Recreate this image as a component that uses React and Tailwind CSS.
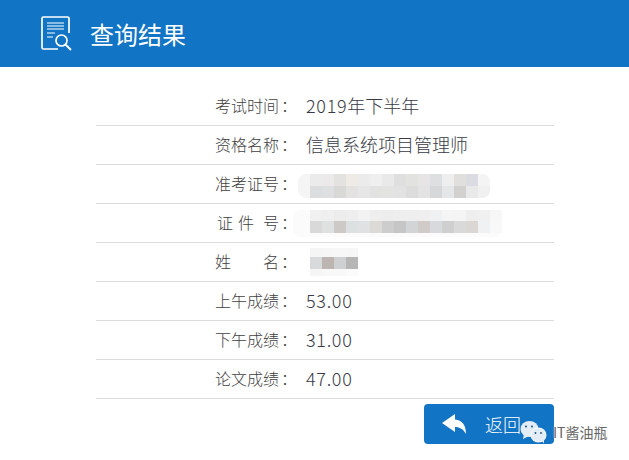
const cjk = 'font-["Noto_Sans_CJK_SC","Microsoft_YaHei",sans-serif]';

// blurred-out personal data, drawn as the mosaic blocks of the screenshot
function Mosaic({ cells, className }) {
  return (
    <div className={`flex ${className}`}>
      {cells.map((c, i) => (
        <div key={i} className="h-full w-[12px]" style={{ background: c }} />
      ))}
    </div>
  );
}

function Row({ label, value, children }) {
  return (
    <div className="flex h-[39px] items-center border-b border-[#dcdcdc] pb-[2px] pl-[119px]">
      <div className="w-[91px] text-[16px] font-light text-[#3f3f3f]">{label}</div>
      {value && <div className="text-[18px] font-light text-[#3a3a46]">{value}</div>}
      {children}
    </div>
  );
}

function Colon() {
  return <span className="ml-[2px]">：</span>;
}

function Num({ children }) {
  return <span className="tracking-[0.7px]">{children}</span>;
}

const rows = [
  { label: '上午成绩', value: '53.00' },
  { label: '下午成绩', value: '31.00' },
  { label: '论文成绩', value: '47.00' },
];

export default function App() {
  return (
    <div className={`relative h-[460px] w-[629px] overflow-hidden bg-white ${cjk}`}>
      {/* header */}
      <div className="flex h-[67px] items-center bg-[#1174c4] pl-[41px]">
        <svg width="32" height="36" viewBox="0 0 32 36" fill="none" stroke="white" className="mt-[1px]">
          <path d="M17 33H2.500a1.500 1.500 0 0 1-1.500-1.500V2.500A1.500 1.500 0 0 1 2.500 1h24A1.500 1.500 0 0 1 28 2.500V17" strokeWidth="1.700" />
          <path d="M6 7h17M6 10h17M6 13h17" strokeWidth="1.200" />
          <path d="M6 17h8M6 21h6" strokeWidth="1.200" />
          <circle cx="20.500" cy="24.500" r="5.500" strokeWidth="1.700" />
          <path d="M24.500 28.500L30 34" strokeWidth="1.900" />
        </svg>
        <div className="ml-[17px] text-[24px] text-white">查询结果</div>
      </div>

      {/* result table */}
      <div className="ml-[96px] mr-[75px] mt-[20px]">
        <Row label={<>考试时间<Colon /></>} value={<><Num>2019</Num>年下半年</>} />
        <Row label={<>资格名称<Colon /></>} value="信息系统项目管理师" />
        <Row label={<>准考证号<Colon /></>}>
          <div className="ml-[-8px] mt-[5px] overflow-hidden rounded-[8px] bg-[#f6f5f5] pl-[12px]">
            <Mosaic className="h-[12px]" cells={['#ebebeb', '#ebe9e9', '#e4e2e0', '#eeebe7', '#ebebeb', '#efefef', '#e9e9e9', '#dfdfdf', '#e2e2e0', '#e6e4e4', '#dedfe1', '#eeeeee', '#e0dfdd', '#dadce2', '#f4f4f4']} />
            <Mosaic className="h-[12px]" cells={['#dcdddf', '#dedfe1', '#d8d8d6', '#e4e2e0', '#e6e6e6', '#e2e2e0', '#e3e3e1', '#e1e3e2', '#dcdcdc', '#e3e3e3', '#d6d7d9', '#e5e6e8', '#d3d1cf', '#e9e9e9', '#f0f0f0']} />
          </div>
        </Row>
        <Row label={<><span className="ml-[2px] mr-[5px]">证</span><span className="mr-[9px]">件</span>号<Colon /></>}>
          <div className="ml-[-13px] mt-[2px] rounded-[8px] bg-[#fbfbfb] pb-[4px] pl-[17px]">
            <Mosaic className="h-[11px]" cells={['#f0f0f0', '#efefef', '#ececec', '#eeeeee', '#f2f2f2', '#eeeeee', '#ededed', '#eeeeee', '#eeeeee', '#efefef', '#eef0f2', '#f5f5f5', '#f4f4f4', '#eeeeee', '#f0f0f0', '#f7f7f7']} />
            <Mosaic className="h-[12px]" cells={['#d9d9d9', '#dfe1e0', '#cdc9c6', '#dce0e1', '#e0e1e3', '#dbdad6', '#cdcdcd', '#c6c6c6', '#d3d4d6', '#d0cbc8', '#d8d9dd', '#cfcfcf', '#d9d9d9', '#d9d6d4', '#f0f1f3', '#f8f8f8']} />
          </div>
        </Row>
        <Row label={<><span className="mr-[32px]">姓</span>名<Colon /></>}>
          <div className="ml-[4px] mt-[1px] flex flex-col">
            <Mosaic className="h-[9px]" cells={['#f5f5f5', '#f6f6f6', '#f7f7f7', '#f6f6f6']} />
            <Mosaic className="h-[12px]" cells={['#d8d9db', '#bdb5b2', '#cfd0d2', '#b6b6b6']} />
            <Mosaic className="h-[7px]" cells={['#f5f5f5', '#f8f8f8', '#f8f8f8', '#fbfbfb']} />
          </div>
        </Row>
        {rows.map((r) => (
          <Row key={r.label} label={<>{r.label}<Colon /></>} value={<Num>{r.value}</Num>} />
        ))}
      </div>

      {/* back button */}
      <div className="ml-[424px] mt-[5px] flex h-[40px] w-[130px] items-center rounded-[4px] bg-[#1174c4]">
        <svg width="24" height="20" viewBox="0 0 24 20" fill="white" className="ml-[18px]">
          <path d="M0 9L13 0V5.500C20 6 24 11 24 20C21 15 18 13 13 13V18Z" />
        </svg>
        <span className="ml-[19px] text-[18px] font-light text-white">返回</span>
      </div>

      {/* wechat watermark */}
      <div className="absolute left-[520px] top-[420px] flex items-center">
        <svg width="27" height="24" viewBox="0 0 27 24">
          <ellipse cx="9.500" cy="9" rx="9" ry="8" fill="#e3edf6" />
          <path d="M4 14L3 19L9 16Z" fill="#e3edf6" />
          <ellipse cx="18.500" cy="15" rx="8" ry="7.500" fill="#ffffff" />
          <ellipse cx="18.500" cy="15" rx="7.300" ry="6.800" fill="#e3edf6" />
          <path d="M21 20L24 23.500L24 18Z" fill="#e3edf6" />
          <circle cx="6" cy="6.500" r="1" fill="#1f4f7a" />
          <circle cx="12" cy="6.500" r="1" fill="#1f4f7a" />
          <circle cx="15.500" cy="13" r="0.900" fill="#1f4f7a" />
          <circle cx="21" cy="13" r="0.900" fill="#1f4f7a" />
        </svg>
        <span className="ml-[6px] text-[14px] text-[#666666] [text-shadow:0_0_2px_#ffffff]">IT酱油瓶</span>
      </div>
    </div>
  );
}
